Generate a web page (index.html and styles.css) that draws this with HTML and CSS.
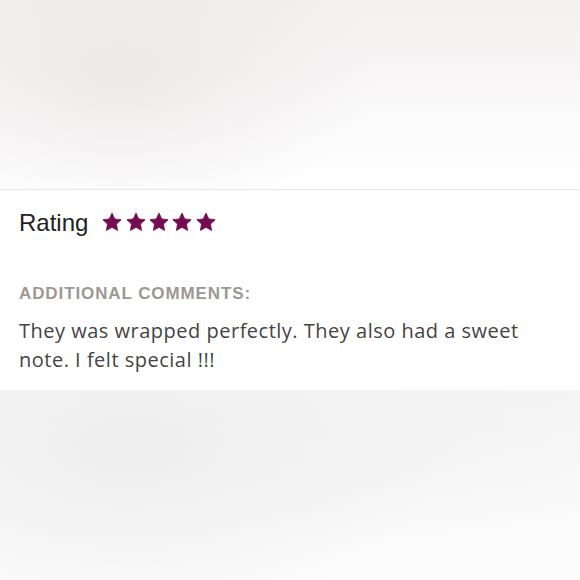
FILE: index.html
```html
<!DOCTYPE html>
<html>
<head>
<meta charset="utf-8">
<link rel="stylesheet" href="styles.css">
</head>
<body>
<div class="top-blur"></div>
<section class="review">
  <div class="rating-row">
    <span class="rating-label">Rating</span>
    <span class="stars">
      <svg class="star" viewBox="0 0 24 24"><path d="M12 1.3L15.29 8.27L22.94 9.25L17.33 14.53L18.76 22.1L12 18.4L5.24 22.1L6.67 14.53L1.06 9.25L8.71 8.27Z"/></svg>
      <svg class="star" viewBox="0 0 24 24"><path d="M12 1.3L15.29 8.27L22.94 9.25L17.33 14.53L18.76 22.1L12 18.4L5.24 22.1L6.67 14.53L1.06 9.25L8.71 8.27Z"/></svg>
      <svg class="star" viewBox="0 0 24 24"><path d="M12 1.3L15.29 8.27L22.94 9.25L17.33 14.53L18.76 22.1L12 18.4L5.24 22.1L6.67 14.53L1.06 9.25L8.71 8.27Z"/></svg>
      <svg class="star" viewBox="0 0 24 24"><path d="M12 1.3L15.29 8.27L22.94 9.25L17.33 14.53L18.76 22.1L12 18.4L5.24 22.1L6.67 14.53L1.06 9.25L8.71 8.27Z"/></svg>
      <svg class="star" viewBox="0 0 24 24"><path d="M12 1.3L15.29 8.27L22.94 9.25L17.33 14.53L18.76 22.1L12 18.4L5.24 22.1L6.67 14.53L1.06 9.25L8.71 8.27Z"/></svg>
    </span>
  </div>
  <h3 class="comments-title">ADDITIONAL COMMENTS:</h3>
  <p class="comment">They was wrapped perfectly. They also had a sweet note. I felt special !!!</p>
</section>
<div class="bottom-blur"></div>
</body>
</html>
```
FILE: styles.css
```css
html, body {
  margin: 0;
  padding: 0;
  height: 100%;
  background: #ffffff;
  font-family: "Liberation Sans", Arial, sans-serif;
}
body {
  display: flex;
  flex-direction: column;
  width: 580px;
  height: 580px;
  overflow: hidden;
}
.top-blur {
  height: 189px;
  flex: none;
  border-bottom: 1px solid #e9e8e8;
  background:
    radial-gradient(ellipse 260px 150px at 120px 70px, rgba(236,232,232,0.9), rgba(240,237,237,0) 100%),
    linear-gradient(180deg, #f2f1ef 0%, #f7f5f5 35%, #fbfafa 60%, #ffffff 100%);
}
.review {
  flex: none;
  height: 200px;
  box-sizing: border-box;
  padding: 18px 19px 0;
  background: #ffffff;
}
.rating-row {
  display: flex;
  align-items: center;
  gap: 14px;
  height: 30px;
}
.rating-label {
  font-size: 24px;
  color: #222222;
}
.stars {
  display: flex;
  gap: 3.3px;
  margin-top: -2px;
}
.star {
  width: 20px;
  height: 20px;
  fill: #740c52;
  stroke: #740c52;
  stroke-width: 1;
  stroke-linejoin: round;
}
.comments-title {
  margin: 46px 0 0;
  font-size: 17px;
  font-weight: bold;
  letter-spacing: 0.9px;
  color: #9c9894;
  line-height: 20px;
}
.comment {
  margin: 12px 0 0;
  font-family: "Open Sans", "Liberation Sans", sans-serif;
  font-size: 20px;
  line-height: 29px;
  letter-spacing: 0.5px;
  color: #444444;
  max-width: 530px;
}
.bottom-blur {
  flex: 1;
  background:
    radial-gradient(ellipse 320px 170px at 130px 60px, rgba(238,238,238,1), rgba(244,244,244,0) 100%),
    radial-gradient(ellipse 280px 120px at 400px 35px, rgba(244,244,244,1), rgba(248,248,248,0) 100%),
    linear-gradient(180deg, #f5f5f5 0%, #fafafa 60%, #fcfcfc 100%);
}
```
